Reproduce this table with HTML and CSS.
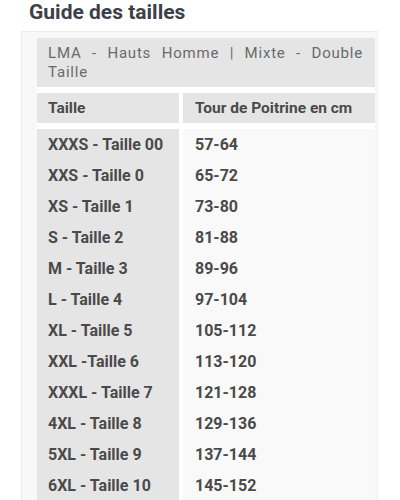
FILE: index.html
```html
<!DOCTYPE html>
<html lang="fr">
<head>
<meta charset="utf-8">
<title>Guide des tailles</title>
<link rel="stylesheet" href="styles.css">
</head>
<body>
<div class="page">
  <h2 class="title">Guide des tailles</h2>
  <div class="panel">
    <div class="chart">
      <div class="caption">LMA - Hauts Homme | Mixte - Double Taille</div>
      <div class="row head">
        <div class="c1">Taille</div>
        <div class="c2">Tour de Poitrine en cm</div>
      </div>
      <div class="rows">
        <div class="row"><div class="c1">XXXS - Taille 00</div><div class="c2">57-64</div></div>
        <div class="row"><div class="c1">XXS - Taille 0</div><div class="c2">65-72</div></div>
        <div class="row"><div class="c1">XS - Taille 1</div><div class="c2">73-80</div></div>
        <div class="row"><div class="c1">S - Taille 2</div><div class="c2">81-88</div></div>
        <div class="row"><div class="c1">M - Taille 3</div><div class="c2">89-96</div></div>
        <div class="row"><div class="c1">L - Taille 4</div><div class="c2">97-104</div></div>
        <div class="row"><div class="c1">XL - Taille 5</div><div class="c2">105-112</div></div>
        <div class="row"><div class="c1">XXL -Taille 6</div><div class="c2">113-120</div></div>
        <div class="row"><div class="c1">XXXL - Taille 7</div><div class="c2">121-128</div></div>
        <div class="row"><div class="c1">4XL - Taille 8</div><div class="c2">129-136</div></div>
        <div class="row"><div class="c1">5XL - Taille 9</div><div class="c2">137-144</div></div>
        <div class="row"><div class="c1">6XL - Taille 10</div><div class="c2">145-152</div></div>
      </div>
    </div>
  </div>
</div>
</body>
</html>
```
FILE: styles.css
```css
html, body {
  margin: 0;
  padding: 0;
  background: #ffffff;
  font-family: Roboto, "Liberation Sans", sans-serif;
  overflow: hidden;
}
.page {
  padding: 0 22px 0 21px;
}
.title {
  margin: 0;
  padding: 0 0 0 8px;
  height: 31px;
  box-sizing: border-box;
  font-size: 21px;
  line-height: 25px;
  font-weight: 700;
  color: #3d4048;
}
.panel {
  background: #f8f8f8;
  border: 1px solid #ececec;
  border-right-color: #f0f0f0;
  padding: 6px 2px 0 15px;
}
.chart {
  background: #ffffff;
  width: 338px;
}
.caption {
  background: #e5e5e5;
  padding: 6px 12px 5px 11px;
  font-size: 15px;
  line-height: 19px;
  letter-spacing: 0.8px;
  color: #6a6a6a;
  text-align: justify;
  text-align-last: left;
}
.row {
  display: grid;
  grid-template-columns: 142px 192px;
  column-gap: 4px;
  font-size: 16px;
  font-weight: 700;
  color: #4a4a4a;
}
.row .c1,
.row .c2 {
  padding-left: 11px;
  height: 31px;
  line-height: 31px;
  white-space: nowrap;
}
.row .c1 {
  background: #e5e5e5;
}
.row .c2 {
  background: #f9f9f9;
  padding-left: 12px;
}
.head {
  margin-top: 6px;
  margin-bottom: 6px;
  font-size: 15.5px;
}
.head .c1,
.head .c2 {
  height: 30px;
  line-height: 31px;
  background: #e5e5e5;
}
```
